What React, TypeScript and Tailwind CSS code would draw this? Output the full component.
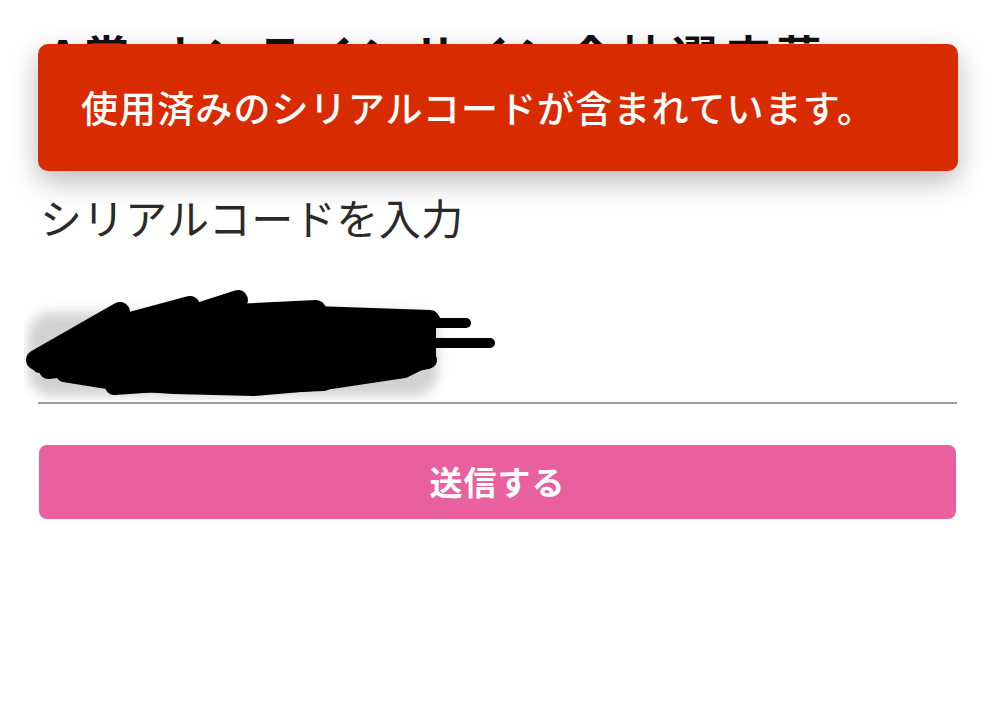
import React from 'react';

const jp = { fontFamily: '"Noto Sans CJK JP", "Noto Sans", sans-serif' };

// Black marker scribble that hides the entered code
const Redaction: React.FC = () => (
  <svg width="480" height="114" viewBox="0 0 480 114" className="block">
    <defs>
      <filter id="soft" x="-10%" y="-30%" width="120%" height="160%">
        <feGaussianBlur stdDeviation="6" />
      </filter>
    </defs>
    <rect x="4" y="26" width="410" height="84" rx="24" fill="#d2d2d2" filter="url(#soft)" />
    <g stroke="#000" strokeLinecap="round" strokeLinejoin="round" fill="none">
      <g strokeWidth="20">
        <line x1="12" y1="74" x2="96" y2="26" />
        <line x1="92" y1="40" x2="166" y2="20" />
        <line x1="152" y1="34" x2="214" y2="14" />
        <line x1="210" y1="28" x2="292" y2="24" />
        <line x1="290" y1="30" x2="406" y2="34" />
      </g>
      <path
        d="M60 48 L120 36 L200 26 L300 30 L404 40 L404 72 L380 84 L300 96 L230 102 L150 100 L90 96 L40 88 Z"
        fill="#000"
        strokeWidth="16"
      />
      <g strokeWidth="18">
        <line x1="24" y1="84" x2="110" y2="74" />
        <line x1="16" y1="78" x2="90" y2="60" />
        <line x1="90" y1="100" x2="210" y2="92" />
        <line x1="200" y1="100" x2="300" y2="96" />
        <line x1="300" y1="94" x2="404" y2="74" />
      </g>
      <g strokeWidth="10">
        <line x1="380" y1="37" x2="442" y2="37" />
        <line x1="375" y1="57" x2="466" y2="57" />
      </g>
    </g>
  </svg>
);

export default function App() {
  return (
    <div className="relative min-h-[704px] w-[999px] bg-white overflow-hidden" style={jp}>
      <div className="px-[38px] pt-[26px]">
        <h1 className="text-[46px] font-bold leading-[56px] tracking-[6px] text-[#111] pl-[10px] whitespace-nowrap">
          A賞 オンラインサイン会抽選応募
        </h1>
        <div className="h-[56px]" />
        <p className="mt-[54px] text-[42px] leading-[50px] tracking-[0.5px] text-[#2a2a2a] pl-[2px]">
          シリアルコードを入力
        </p>
        <div className="mt-[38px] h-[124px] w-[919px] border-b-2 border-[#9a9a9a]">
          <div className="ml-[-14px] pt-[6px]">
            <Redaction />
          </div>
        </div>
        <button
          type="button"
          className="mt-[41px] ml-[1px] flex h-[74px] w-[917px] items-center justify-center rounded-[8px] bg-[#e8609e] text-[33px] font-bold tracking-[1px] text-white"
        >
          送信する
        </button>
      </div>

      {/* error toast */}
      <div className="absolute left-[38px] top-[44px] flex h-[127px] w-[920px] items-center rounded-[10px] bg-[#d92b00] pl-[43px] shadow-[0_10px_28px_rgba(0,0,0,0.28)]">
        <span className="text-[37px] font-medium tracking-[1.1px] text-white">
          使用済みのシリアルコードが含まれています。
        </span>
      </div>
    </div>
  );
}
